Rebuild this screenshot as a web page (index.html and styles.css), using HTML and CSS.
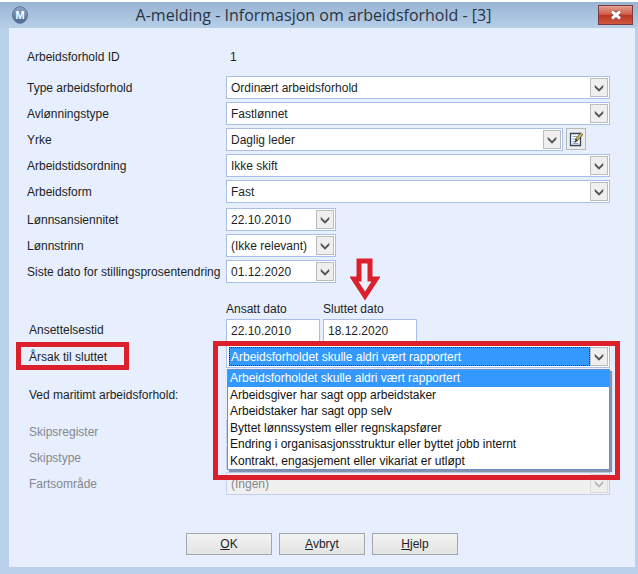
FILE: index.html
```html
<!DOCTYPE html>
<html lang="no">
<head>
  <meta charset="UTF-8">
  <meta name="viewport" content="width=device-width, initial-scale=1.0">
  <title>A-melding - Informasjon om arbeidsforhold</title>
  <link rel="stylesheet" href="styles.css">
</head>
<body>
  <svg width="0" height="0" class="sprite">
    <symbol id="chevron" viewBox="0 0 16 18">
      <path d="M3.500 6 L8 10.500 L12.500 6 V9 L8 13.500 L3.500 9 Z" fill="currentColor"/>
    </symbol>
  </svg>

  <div class="window">
    <header class="titlebar">
      <svg class="logo" viewBox="0 0 18 18">
        <defs>
          <linearGradient id="logo-fill" x1="0" y1="0" x2="0" y2="1">
            <stop offset="0" stop-color="#8fa6c4"/>
            <stop offset="1" stop-color="#4a6795"/>
          </linearGradient>
        </defs>
        <ellipse cx="9" cy="9" rx="7.500" ry="8.300" fill="url(#logo-fill)" stroke="#5b7396"/>
        <text x="9" y="13" text-anchor="middle">M</text>
      </svg>
      <h1>A-melding - Informasjon om arbeidsforhold - [3]</h1>
      <button type="button" class="close" aria-label="Lukk">
        <svg viewBox="0 0 14 10"><path d="M3 1.500 L11 8.500 M11 1.500 L3 8.500" stroke="#6d3a3a" stroke-width="4.500"/><path d="M3 1.500 L11 8.500 M11 1.500 L3 8.500" stroke="#fff" stroke-width="3"/></svg>
      </button>
    </header>

    <form class="content">
      <div class="row id-row">
        <span>Arbeidsforhold ID</span>
        <span class="value">1</span>
      </div>

      <div class="group">
        <div class="row">
          <label for="type">Type arbeidsforhold</label>
          <div class="combo">
            <select id="type"><option>Ordinært arbeidsforhold</option></select>
            <svg class="arrow"><use href="#chevron"/></svg>
          </div>
        </div>
        <div class="row">
          <label for="lonn">Avlønningstype</label>
          <div class="combo">
            <select id="lonn"><option>Fastlønnet</option></select>
            <svg class="arrow"><use href="#chevron"/></svg>
          </div>
        </div>
        <div class="row">
          <label for="yrke">Yrke</label>
          <div class="with-button">
            <div class="combo">
              <select id="yrke"><option>Daglig leder</option></select>
              <svg class="arrow"><use href="#chevron"/></svg>
            </div>
            <button type="button" class="edit" aria-label="Rediger yrke">
              <svg viewBox="0 0 16 16">
                <path d="M2.500 2.500 H12.500 V14.500 H2.500 Z" fill="#fff" stroke="#34435c" stroke-width="1.300"/>
                <path d="M4.500 5.500 H9 M4.500 8 H7.500 M4.500 10.500 H6.500" stroke="#8ea3c0"/>
                <path d="M4.500 12.500 H10.500" stroke="#8ea3c0"/>
                <path d="M14 2.500 L8 9.500" stroke="#4c4a26" stroke-width="3.200"/>
                <path d="M14 2.500 L9 8.300" stroke="#dfc35a" stroke-width="1.800"/>
                <path d="M7.800 8.500 L6 12 L9 10.500 Z" fill="#333"/>
              </svg>
            </button>
          </div>
        </div>
        <div class="row">
          <label for="tid">Arbeidstidsordning</label>
          <div class="combo">
            <select id="tid"><option>Ikke skift</option></select>
            <svg class="arrow"><use href="#chevron"/></svg>
          </div>
        </div>
        <div class="row">
          <label for="form">Arbeidsform</label>
          <div class="combo">
            <select id="form"><option>Fast</option></select>
            <svg class="arrow"><use href="#chevron"/></svg>
          </div>
        </div>
      </div>

      <div class="group dates">
        <div class="row">
          <label for="ansiennitet">Lønnsansiennitet</label>
          <div class="combo short">
            <select id="ansiennitet"><option>22.10.2010</option></select>
            <svg class="arrow"><use href="#chevron"/></svg>
          </div>
        </div>
        <div class="row">
          <label for="trinn">Lønnstrinn</label>
          <div class="combo short">
            <select id="trinn"><option>(Ikke relevant)</option></select>
            <svg class="arrow"><use href="#chevron"/></svg>
          </div>
        </div>
        <div class="row">
          <label for="siste">Siste dato for stillingsprosentendring</label>
          <div class="combo short">
            <select id="siste"><option>01.12.2020</option></select>
            <svg class="arrow"><use href="#chevron"/></svg>
          </div>
        </div>
      </div>

      <div class="row period">
        <span class="period-label">Ansettelsestid</span>
        <div class="period-fields">
          <div class="period-field">
            <label for="ansatt">Ansatt dato</label>
            <input type="text" id="ansatt" value="22.10.2010">
          </div>
          <div class="period-field">
            <label for="sluttet">Sluttet dato</label>
            <input type="text" id="sluttet" value="18.12.2020">
            <svg class="pointer" viewBox="0 0 30 44">
              <path d="M9 3 H20 V21 H26 L15 38 L4 21 H9 Z" fill="#eef0fb" stroke="#dc202b" stroke-width="5"/>
            </svg>
          </div>
        </div>
      </div>

      <div class="row reason">
        <label for="arsak" class="marked">Årsak til sluttet</label>
        <div class="combo open">
          <select id="arsak"><option>Arbeidsforholdet skulle aldri vært rapportert</option></select>
          <svg class="arrow"><use href="#chevron"/></svg>
          <ul class="list" role="listbox">
            <li class="selected" role="option">Arbeidsforholdet skulle aldri vært rapportert</li>
            <li role="option">Arbeidsgiver har sagt opp arbeidstaker</li>
            <li role="option">Arbeidstaker har sagt opp selv</li>
            <li role="option">Byttet lønnssystem eller regnskapsfører</li>
            <li role="option">Endring i organisasjonsstruktur eller byttet jobb internt</li>
            <li role="option">Kontrakt, engasjement eller vikariat er utløpt</li>
          </ul>
          <div class="frame"></div>
        </div>
      </div>

      <div class="row lower heading">
        <span>Ved maritimt arbeidsforhold:</span>
      </div>

      <div class="group lower disabled">
        <div class="row">
          <label for="register">Skipsregister</label>
          <div class="combo">
            <select id="register" disabled><option></option></select>
            <svg class="arrow"><use href="#chevron"/></svg>
          </div>
        </div>
        <div class="row">
          <label for="skip">Skipstype</label>
          <div class="combo">
            <select id="skip" disabled><option></option></select>
            <svg class="arrow"><use href="#chevron"/></svg>
          </div>
        </div>
        <div class="row">
          <label for="fart">Fartsområde</label>
          <div class="combo">
            <select id="fart" disabled><option>(Ingen)</option></select>
            <svg class="arrow"><use href="#chevron"/></svg>
          </div>
        </div>
      </div>

      <div class="buttons">
        <button type="button"><u>O</u>K</button>
        <button type="button"><u>A</u>vbryt</button>
        <button type="button"><u>H</u>jelp</button>
      </div>
    </form>
  </div>
</body>
</html>
```
FILE: styles.css
```css
*, *::after {
  box-sizing: border-box;
}
body {
  margin: 0;
  background-color: #fff;
  font-family: "Liberation Sans", Arial, sans-serif;
  font-size: 12px;
  line-height: 16px;
  color: #1c1f26;
}
button, input, select {
  font: inherit;
  color: inherit;
}
label {
  white-space: nowrap;
}
.sprite {
  position: absolute;
}
.window {
  margin-top: 2px;
  padding: 0 3px 7px 9px;
  background: linear-gradient(#98b4d3, #b9d1ea 28px);
}
.titlebar {
  display: flex;
  align-items: center;
  height: 26px;
}
.logo {
  width: 18px;
  height: 18px;
  margin-left: 2px;
}
.logo text {
  font: bold 11px "Liberation Sans", Arial, sans-serif;
  fill: #fff;
}
.titlebar h1 {
  flex: 1;
  margin: 0;
  text-align: center;
  font: 16px "Open Sans", "Noto Sans", sans-serif;
  color: #2a3442;
}
.close {
  display: flex;
  align-items: center;
  justify-content: center;
  width: 35px;
  height: 20px;
  margin-right: 2px;
  padding: 0;
  border: 1px solid #7d3b3f;
  background: linear-gradient(#e3a193, #cf5b45 48%, #bd3420 52%, #d2573f);
}
.close svg {
  width: 14px;
  height: 10px;
}
.content {
  padding: 17px 25px 12px 18px;
  background-color: #e7eefd;
}
.group {
  display: flex;
  flex-direction: column;
  gap: 3px;
}
.row {
  display: grid;
  grid-template-columns: 199px 1fr;
  align-items: center;
  min-height: 23px;
}
.id-row {
  margin-bottom: 8px;
}
.value {
  padding-left: 4px;
}
.combo {
  position: relative;
  height: 23px;
  border: 1px solid #a9bfe8;
  background-color: #fff;
}
.combo select {
  display: block;
  width: 100%;
  height: 21px;
  padding: 0 20px 0 4px;
  border: none;
  appearance: none;
  background: transparent;
  opacity: 1;
}
.short {
  width: 110px;
}
.arrow {
  position: absolute;
  top: 1px;
  right: 1px;
  width: 18px;
  height: 19px;
  border: 1px solid #b9bcc2;
  background-color: #efefef;
  color: #555;
  pointer-events: none;
}
.with-button {
  display: flex;
  gap: 3px;
  padding-right: 24px;
}
.with-button .combo {
  flex: 1;
}
.edit {
  width: 20px;
  height: 22px;
  padding: 1px;
  border: 1px solid #b5b9c0;
  background-color: #ededed;
}
.edit svg {
  display: block;
  width: 16px;
  height: 16px;
}
.dates {
  margin-top: 5px;
}
.period {
  margin-top: 16px;
  align-items: end;
}
.period-label {
  padding: 0 0 4px 2px;
}
.period-fields {
  display: flex;
  gap: 3px;
}
.period-field {
  position: relative;
  width: 94px;
}
.period-field label {
  display: block;
  height: 20px;
  line-height: 20px;
}
.period-field input {
  display: block;
  width: 100%;
  height: 23px;
  padding: 0 4px;
  border: 1px solid #a9bfe8;
  background-color: #fff;
}
.pointer {
  position: absolute;
  left: 27px;
  bottom: 40px;
  width: 30px;
  height: 44px;
}
.reason {
  margin-top: 3px;
}
.marked {
  position: relative;
  justify-self: start;
  padding-left: 2px;
}
.marked::after {
  content: "";
  position: absolute;
  top: -7px;
  left: -11px;
  width: 113px;
  height: 28px;
  border: 5px solid #dc202b;
}
.open select {
  width: calc(100% - 21px);
  height: 19px;
  margin: 1px 0 0 2px;
  padding: 0 1px;
  border: 1px dotted #14305c;
  background-color: #3399ff;
  color: #fff;
}
.list {
  position: absolute;
  z-index: 1;
  top: 23px;
  left: 0;
  right: -1px;
  display: grid;
  grid-auto-rows: 1fr;
  height: 101px;
  margin: 0;
  padding: 0;
  list-style: none;
  border: 1px solid #6c8fc8;
  background-color: #fff;
  box-shadow: 2px 2px 1px #8593ad;
}
.list li {
  padding-left: 2px;
  color: #111;
}
.list .selected {
  background-color: #3399ff;
  color: #fff;
}
.frame {
  position: absolute;
  z-index: 2;
  top: -5px;
  left: -14px;
  right: -11px;
  height: 139px;
  border: 5px solid #dc202b;
  pointer-events: none;
}
.lower label,
.lower span {
  padding-left: 2px;
}
.heading {
  margin: 15px 0 14px;
}
.disabled {
  color: #85888f;
}
.disabled .combo {
  border-color: #c3d1ee;
  background-color: #f0f0f0;
}
.disabled .arrow {
  border-color: #d8dade;
  color: #b9b9b9;
}
.buttons {
  display: flex;
  justify-content: center;
  gap: 7px;
  margin-top: 38px;
  padding-left: 7px;
}
.buttons button {
  width: 86px;
  height: 22px;
  padding: 0;
  border: 1px solid #a3a6ac;
  background: linear-gradient(#f3f3f3, #e3e3e3);
}
```
